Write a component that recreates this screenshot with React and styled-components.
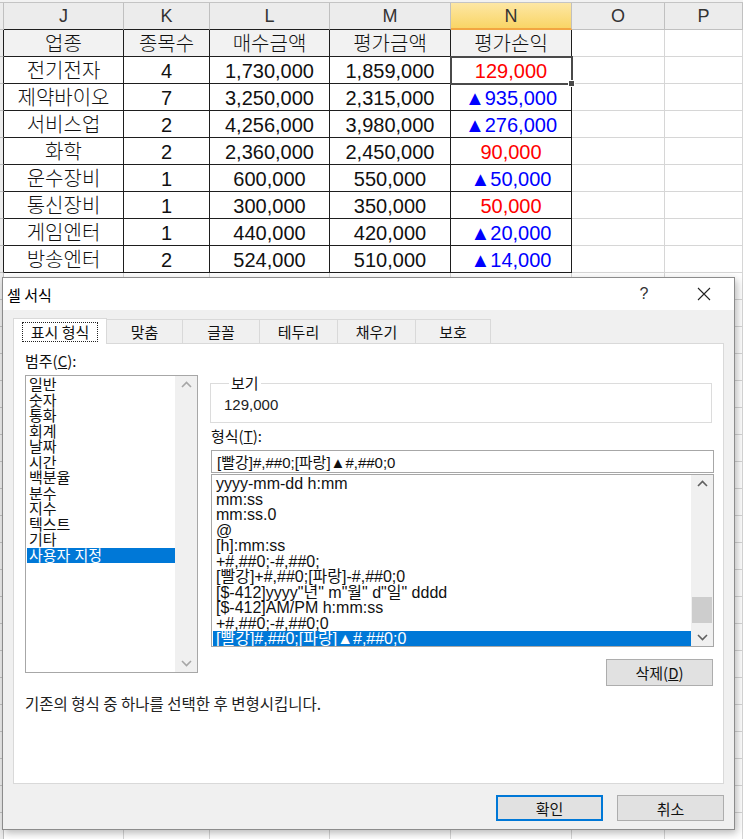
import React from 'react';
import styled, { createGlobalStyle } from 'styled-components';

const GlobalStyle = createGlobalStyle`
  html, body {
    margin: 0;
    padding: 0;
    background: #fff;
    overflow: hidden;
  }
  body {
    font-family: "Liberation Sans", "Noto Sans CJK KR", sans-serif;
  }
`;

const COLUMNS = '4px 120px 86px 120px 121px 121px 93px 1fr';
const LETTERS = ['J', 'K', 'L', 'M', 'N', 'O', 'P'];
const LINE = '#1e1e1e';
const GRID = '#d6d6d6';

const TABLE = [
  { cells: ['업종', '종목수', '매수금액', '평가금액', '평가손익'], head: true },
  { cells: ['전기전자', '4', '1,730,000', '1,859,000', '129,000'], tone: 'red' },
  { cells: ['제약바이오', '7', '3,250,000', '2,315,000', '▲935,000'], tone: 'blue' },
  { cells: ['서비스업', '2', '4,256,000', '3,980,000', '▲276,000'], tone: 'blue' },
  { cells: ['화학', '2', '2,360,000', '2,450,000', '90,000'], tone: 'red' },
  { cells: ['운수장비', '1', '600,000', '550,000', '▲50,000'], tone: 'blue' },
  { cells: ['통신장비', '1', '300,000', '350,000', '50,000'], tone: 'red' },
  { cells: ['게임엔터', '1', '440,000', '420,000', '▲20,000'], tone: 'blue' },
  { cells: ['방송엔터', '2', '524,000', '510,000', '▲14,000'], tone: 'blue' },
];

const CATEGORIES = ['일반', '숫자', '통화', '회계', '날짜', '시간', '백분율', '분수', '지수', '텍스트', '기타', '사용자 지정'];

const FORMATS = [
  'yyyy-mm-dd h:mm',
  'mm:ss',
  'mm:ss.0',
  '@',
  '[h]:mm:ss',
  '+#,##0;-#,##0;',
  '[빨강]+#,##0;[파랑]-#,##0;0',
  '[$-412]yyyy"년" m"월" d"일" dddd',
  '[$-412]AM/PM h:mm:ss',
  '+#,##0;-#,##0;0',
  '[빨강]#,##0;[파랑]▲#,##0;0',
];

const TABS = [
  { label: '표시 형식', w: 94, active: true },
  { label: '맞춤', w: 76 },
  { label: '글꼴', w: 77 },
  { label: '테두리', w: 78 },
  { label: '채우기', w: 78 },
  { label: '보호', w: 75 },
];

/* ---------- sheet ---------- */

const Page = styled.div`
  position: relative;
  width: 743px;
  height: 839px;
  overflow: hidden;
`;

const TopEdge = styled.div`
  height: 2px;
  background: #f2f2f2;
  border-bottom: 1px solid #c4c4c4;
`;

const SheetRow = styled.div`
  display: grid;
  grid-template-columns: ${COLUMNS};
  height: ${p => p.$h}px;
`;

const ColHead = styled.div`
  box-sizing: border-box;
  display: flex;
  align-items: center;
  justify-content: center;
  background: ${p => (p.$active ? 'linear-gradient(#fde7a4, #f9d566)' : '#ececec')};
  border-right: 1px solid #c0c0c0;
  border-bottom: ${p => (p.$active ? '2px solid #f2a541' : `1px solid ${p.$edge ? LINE : '#c0c0c0'}`)};
  color: #333;
  font-size: 18px;
  padding-top: 1px;
`;

const RowHead = styled.div`
  box-sizing: border-box;
  background: #ececec;
  border-bottom: 1px solid #c0c0c0;
  border-right: 1px solid ${p => (p.$edge ? LINE : '#c0c0c0')};
`;

const Cell = styled.div`
  position: relative;
  box-sizing: border-box;
  display: flex;
  align-items: center;
  justify-content: center;
  padding-top: 2px;
  background: ${p => (p.$head ? '#f2f2f2' : '#fff')};
  border-right: 1px solid ${p => (p.$edge ? LINE : GRID)};
  border-bottom: 1px solid ${p => (p.$edge ? LINE : GRID)};
  color: ${p => (p.$tone === 'red' ? '#ff0000' : p.$tone === 'blue' ? '#0000ff' : '#111')};
  font-size: 20px;
  font-weight: 300;
  line-height: 24px;
  white-space: nowrap;
  outline: ${p => (p.$selected ? '2px solid #4a4a4a' : 'none')};
  outline-offset: -1px;
  z-index: ${p => (p.$selected ? 1 : 0)};

  &::after {
    content: '';
    display: ${p => (p.$selected ? 'block' : 'none')};
    position: absolute;
    right: -4px;
    bottom: -4px;
    width: 5px;
    height: 5px;
    background: #4a4a4a;
    border: 1px solid #fff;
  }
`;

function Sheet() {
  const empty = Array.from({ length: 22 });
  return (
    <div>
      <TopEdge />
      <SheetRow $h={27}>
        <RowHead />
        {LETTERS.map((l, i) => (
          <ColHead key={l} $active={l === 'N'} $edge={i < 5}>{l}</ColHead>
        ))}
      </SheetRow>
      {TABLE.map((row, ri) => (
        <SheetRow key={ri} $h={27}>
          <RowHead $edge />
          {row.cells.map((c, ci) => (
            <Cell
              key={ci}
              $edge
              $head={row.head}
              $tone={ci === 4 ? row.tone : undefined}
              $selected={ri === 1 && ci === 4}
            >
              {c}
            </Cell>
          ))}
          <Cell />
          <Cell />
        </SheetRow>
      ))}
      {empty.map((_, ri) => (
        <SheetRow key={`e${ri}`} $h={27}>
          <RowHead />
          {LETTERS.map(l => <Cell key={l} />)}
        </SheetRow>
      ))}
    </div>
  );
}

/* ---------- dialog ---------- */

const Dialog = styled.div`
  position: absolute;
  top: 277px;
  left: 2px;
  width: 733px;
  height: 553px;
  box-sizing: border-box;
  background: #f0f0f0;
  border: 1px solid #8c8c8c;
  box-shadow: 2px 3px 8px rgba(0, 0, 0, 0.28);
  display: flex;
  flex-direction: column;
  font-family: "Liberation Sans", "Noto Sans CJK KR", sans-serif;
  color: #000;
`;

const TitleBar = styled.div`
  height: 32px;
  background: #fff;
  display: flex;
  align-items: center;
  padding-left: 4px;
  font-size: 15px;
`;

const Title = styled.span`
  flex: 1;
  font-family: "Noto Sans CJK KR", sans-serif;
`;

const TitleBtn = styled.span`
  width: 46px;
  height: 32px;
  display: flex;
  align-items: center;
  justify-content: center;
  font-size: 16px;
  color: #333;
  margin-right: ${p => p.$gap || 0}px;
`;

const Body = styled.div`
  flex: 1;
  padding: 8px 10px 0;
  display: flex;
  flex-direction: column;
`;

const TabRow = styled.div`
  display: flex;
  align-items: flex-end;
  height: 25px;
`;

const Tab = styled.div`
  box-sizing: border-box;
  width: ${p => p.$w}px;
  height: ${p => (p.$active ? 26 : 24)}px;
  display: flex;
  align-items: center;
  justify-content: center;
  background: ${p => (p.$active ? '#fff' : '#f0f0f0')};
  border: 1px solid #d9d9d9;
  border-bottom: none;
  border-left: ${p => (p.$first || p.$active ? '1px solid #d9d9d9' : 'none')};
  font-family: "Noto Sans CJK KR", sans-serif;
  font-size: 15px;
  color: #111;
  margin-bottom: ${p => (p.$active ? -1 : 0)}px;
  position: relative;
  z-index: ${p => (p.$active ? 1 : 0)};
`;

const FocusText = styled.span`
  border: 1px dotted #222;
  padding: 0 8px;
  line-height: 18px;
`;

const Panel = styled.div`
  box-sizing: border-box;
  height: 441px;
  background: #fff;
  border: 1px solid #d9d9d9;
  padding: 9px 9px 0 11px;
  display: flex;
  flex-direction: column;
`;

const Columns = styled.div`
  display: grid;
  grid-template-columns: 173px 1fr;
  column-gap: 13px;
`;

const Col = styled.div`
  display: flex;
  flex-direction: column;
  padding-top: ${p => p.$pt || 0}px;
`;

const Label = styled.div`
  font-family: "Noto Sans CJK KR", sans-serif;
  font-size: 15px;
  line-height: 16px;
  color: #111;
  margin-top: ${p => p.$mt || 0}px;

  u {
    text-decoration: underline;
    text-underline-offset: 1px;
  }
`;

const ListBox = styled.div`
  box-sizing: border-box;
  height: ${p => p.$h}px;
  border: 1px solid #a7a7a7;
  display: flex;
  margin-top: ${p => p.$mt || 0}px;
  background: #fff;
`;

const Items = styled.div`
  flex: 1;
  padding: 1px 0 0 1px;
  overflow: hidden;
`;

const Item = styled.div`
  height: 15.5px;
  line-height: 15.5px;
  padding-left: ${p => p.$pad || 2}px;
  font-size: ${p => p.$size || 15}px;
  white-space: nowrap;
  background: ${p => (p.$selected ? '#0078d7' : 'transparent')};
  color: ${p => (p.$selected ? '#fff' : '#111')};
`;

const ScrollBar = styled.div`
  width: 22px;
  background: #f0f0f0;
  display: flex;
  flex-direction: column;
`;

const Arrow = styled.div`
  height: 17px;
  display: flex;
  align-items: center;
  justify-content: center;
`;

const Track = styled.div`
  flex: 1;
  display: flex;
  flex-direction: column;
`;

const Thumb = styled.div`
  margin: ${p => p.$top}px 1px 0;
  height: 26px;
  background: #cdcdcd;
`;

const GroupBox = styled.fieldset`
  margin: 0 2px 0 -1px;
  padding: 4px 12px 7px;
  border: 1px solid #dcdcdc;
  min-width: 0;
`;

const Legend = styled.legend`
  font-family: "Noto Sans CJK KR", sans-serif;
  font-size: 15px;
  line-height: 16px;
  padding: 0 2px;
  margin-left: 6px;
  color: #111;
`;

const Preview = styled.div`
  font-size: 15px;
  line-height: 20px;
  color: #222;
  padding-left: 1px;
`;

const Input = styled.div`
  box-sizing: border-box;
  height: 23px;
  margin-top: 6px;
  border: 1px solid #a7a7a7;
  display: flex;
  align-items: center;
  padding-left: 5px;
  font-size: 15px;
  color: #111;
  white-space: nowrap;
`;

const ButtonRow = styled.div`
  display: flex;
  justify-content: flex-end;
  gap: 14px;
  margin-top: ${p => p.$mt || 0}px;
  padding-right: ${p => p.$pr || 0}px;
`;

const Button = styled.div`
  box-sizing: border-box;
  width: 107px;
  height: ${p => p.$h || 26}px;
  display: flex;
  align-items: center;
  justify-content: center;
  background: #e1e1e1;
  border: ${p => (p.$default ? '2px solid #0078d7' : '1px solid #adadad')};
  font-family: "Noto Sans CJK KR", sans-serif;
  font-size: 15px;
  color: #111;

  u {
    text-underline-offset: 1px;
  }
`;

const Description = styled.div`
  margin-top: 6px;
  font-family: "Noto Sans CJK KR", sans-serif;
  font-size: 15.5px;
  color: #222;
`;

function Chevron({ down, color }) {
  return (
    <svg width="11" height="7" viewBox="0 0 11 7">
      <polyline
        points={down ? '1,1 5.5,5.5 10,1' : '1,6 5.5,1.5 10,6'}
        fill="none"
        stroke={color}
        strokeWidth="1.6"
      />
    </svg>
  );
}

function CloseIcon() {
  return (
    <svg width="14" height="14" viewBox="0 0 14 14">
      <path d="M1 1 L13 13 M13 1 L1 13" stroke="#222" strokeWidth="1.1" />
    </svg>
  );
}

function FormatDialog() {
  return (
    <Dialog>
      <TitleBar>
        <Title>셀 서식</Title>
        <TitleBtn $gap={14}>?</TitleBtn>
        <TitleBtn $gap={7}><CloseIcon /></TitleBtn>
      </TitleBar>
      <Body>
        <TabRow>
          {TABS.map((t, i) => (
            <Tab key={t.label} $w={t.w} $active={t.active} $first={i === 0}>
              {t.active ? <FocusText>{t.label}</FocusText> : t.label}
            </Tab>
          ))}
        </TabRow>
        <Panel>
          <Columns>
            <Col>
              <Label>범주(<u>C</u>):</Label>
              <ListBox $h={298} $mt={6}>
                <Items>
                  {CATEGORIES.map((c, i) => (
                    <Item key={c} $selected={i === CATEGORIES.length - 1}>{c}</Item>
                  ))}
                </Items>
                <ScrollBar>
                  <Arrow><Chevron color="#a6a6a6" /></Arrow>
                  <Track />
                  <Arrow><Chevron down color="#a6a6a6" /></Arrow>
                </ScrollBar>
              </ListBox>
            </Col>
            <Col $pt={22}>
              <GroupBox>
                <Legend>보기</Legend>
                <Preview>129,000</Preview>
              </GroupBox>
              <Label $mt={5}>형식(<u>T</u>):</Label>
              <Input>[빨강]#,##0;[파랑]▲#,##0;0</Input>
              <ListBox $h={173} $mt={1}>
                <Items>
                  {FORMATS.map((f, i) => (
                    <Item key={f} $size={16} $pad={3} $selected={i === FORMATS.length - 1}>{f}</Item>
                  ))}
                </Items>
                <ScrollBar>
                  <Arrow><Chevron color="#606060" /></Arrow>
                  <Track><Thumb $top={105} /></Track>
                  <Arrow><Chevron down color="#606060" /></Arrow>
                </ScrollBar>
              </ListBox>
              <ButtonRow $mt={12} $pr={1}>
                <Button $h={27}>삭제(<u>D</u>)</Button>
              </ButtonRow>
            </Col>
          </Columns>
          <Description>기존의 형식 중 하나를 선택한 후 변형시킵니다.</Description>
        </Panel>
        <ButtonRow $mt={11} $pr={0}>
          <Button $default>확인</Button>
          <Button>취소</Button>
        </ButtonRow>
      </Body>
    </Dialog>
  );
}

export default function App() {
  return (
    <Page>
      <GlobalStyle />
      <Sheet />
      <FormatDialog />
    </Page>
  );
}
